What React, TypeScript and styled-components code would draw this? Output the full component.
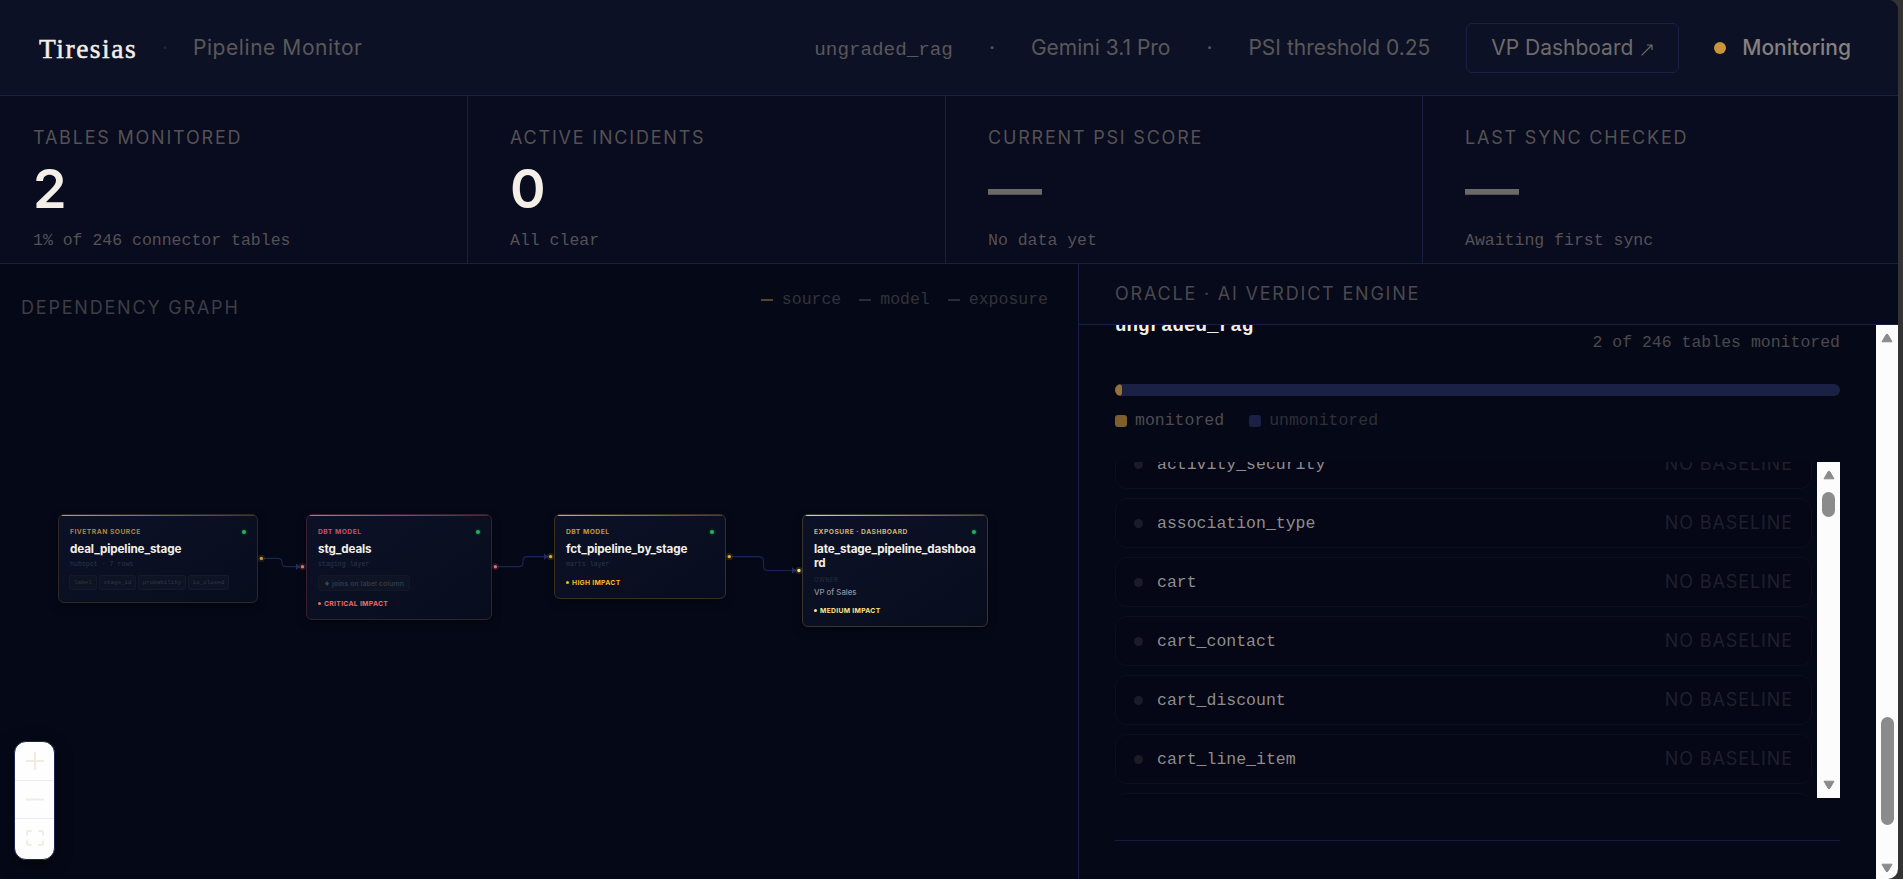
import React from "react";
import styled, { createGlobalStyle } from "styled-components";

const sans = `Inter, "Liberation Sans", sans-serif`;
const mono = `"Liberation Mono", "DejaVu Sans Mono", monospace`;
const line = "#1c1f45";

const GlobalStyle = createGlobalStyle`
  *, *::before, *::after { box-sizing: border-box; }
  html, body { margin: 0; background: #333333; }
  body { overflow: hidden; }
`;

const Page = styled.div`
  width: 1898px;
  height: 879px;
  display: flex;
  flex-direction: column;
  overflow: hidden;
  border-radius: 0 10px 10px 0;
  background: #050817;
  font-family: ${sans};
  color: #f0ece4;
`;

/* ---------- header ---------- */

const Header = styled.header`
  height: 96px;
  flex: none;
  display: flex;
  align-items: center;
  padding: 0 47px 0 39px;
  border-bottom: 1px solid ${line};
  background: #0d1126;
  font-size: 21px;
  line-height: 26px;
  color: #5a5859;
  white-space: nowrap;
`;

const Brand = styled.div`
  width: 98px;
  padding-top: 3px;
  font-family: "Liberation Serif", serif;
  font-size: 27.5px;
  line-height: 30px;
  letter-spacing: 1.5px;
  color: #f3efe6;
  -webkit-text-stroke: 0.5px #f3efe6;
`;

const BrandDot = styled.div`
  width: 56px;
  text-align: center;
  color: #1e2148;
`;

const Product = styled.div`
  letter-spacing: 0.56px;
`;

const HeaderMeta = styled.div`
  margin-left: auto;
  display: flex;
  align-items: center;
`;

const Connector = styled.div`
  padding-top: 4px;
  font-family: ${mono};
  font-size: 19.25px;
`;

const MetaDot = styled.div`
  width: 78px;
  text-align: center;
`;

const DashboardButton = styled.button`
  width: 213px;
  height: 50px;
  margin: 0 35px 0 36px;
  display: flex;
  align-items: center;
  justify-content: center;
  gap: 8px;
  padding: 0 1px 0 0;
  border: 1px solid ${line};
  border-radius: 6px;
  background: transparent;
  font: 400 21px/26px ${sans};
  color: #6e6b6b;
`;

const OpenIcon = styled.svg`
  margin-top: 4px;
`;

const Status = styled.div`
  display: flex;
  align-items: center;
  gap: 16px;
  font-weight: 500;
  color: #85817f;
`;

const StatusDot = styled.span`
  width: 12px;
  height: 12px;
  border-radius: 50%;
  background: #c9953a;
`;

/* ---------- stats ---------- */

const Stats = styled.section`
  height: 168px;
  flex: none;
  display: grid;
  grid-template-columns: 468px 478px 477px 1fr;
  border-bottom: 1px solid ${line};
  background: #090b1f;
`;

const Stat = styled.div<{ $first?: boolean }>`
  padding: 29px 0 0 ${(p) => (p.$first ? 33 : 42)}px;
  border-right: 1px solid ${line};
  &:last-child { border-right: 0; }
`;

const Caps = styled.div<{ $spacing?: number; $color?: string }>`
  font-size: 18px;
  line-height: 26px;
  letter-spacing: ${(p) => p.$spacing ?? 1.8}px;
  color: ${(p) => p.$color ?? "#555253"};
  white-space: nowrap;
`;

const StatValue = styled.div<{ $empty?: boolean }>`
  margin-top: 11px;
  font-size: 54px;
  line-height: 54px;
  font-weight: 600;
  color: ${(p) => (p.$empty ? "#6c6969" : "#f3efe6")};
`;

const Mono = styled.div<{ $color?: string }>`
  font-family: ${mono};
  font-size: 16.5px;
  line-height: 22px;
  color: ${(p) => p.$color ?? "#555253"};
  white-space: nowrap;
`;

const StatNote = styled(Mono)`
  margin-top: 14px;
`;

/* ---------- graph ---------- */

const Main = styled.main`
  flex: 1;
  min-height: 0;
  display: grid;
  grid-template-columns: 1078px 1fr;
`;

const Graph = styled.section`
  position: relative;
  min-width: 0;
`;

const GraphBar = styled.div`
  display: flex;
  align-items: flex-start;
  justify-content: space-between;
  padding: 25px 30px 0 21px;
`;

const GraphTitle = styled(Caps)`
  padding-top: 6px;
`;

const Legend = styled.div`
  display: flex;
  gap: 18px;
`;

const LegendItem = styled(Mono)`
  display: flex;
  align-items: center;
  gap: 9px;
`;

const LegendDash = styled.span<{ $color: string }>`
  width: 12px;
  height: 2px;
  background: ${(p) => p.$color};
`;

const Edges = styled.svg`
  position: absolute;
  left: 0;
  top: 0;
  width: 1078px;
  height: 615px;
`;

const Node = styled.article<{ $x: number; $w: number; $h: number; $accent: string; $edge: string }>`
  position: absolute;
  left: ${(p) => p.$x}px;
  top: 250px;
  width: ${(p) => p.$w}px;
  height: ${(p) => p.$h}px;
  padding: 12px 11px 0 11px;
  overflow: hidden;
  border: 1px solid ${(p) => p.$edge};
  border-radius: 6px;
  background: linear-gradient(145deg, #0d1127, #070d1d);
  box-shadow: 0 3px 10px rgba(0, 0, 0, 0.4);
  &::before {
    content: "";
    position: absolute;
    left: 0;
    right: 0;
    top: 0;
    height: 1.4px;
    background: linear-gradient(90deg, ${(p) => p.$accent}, ${(p) => p.$accent}44);
  }
`;

const NodeHead = styled.div`
  display: flex;
  align-items: center;
  justify-content: space-between;
  height: 10px;
`;

const NodeKind = styled.span<{ $color: string }>`
  font-size: 6.7px;
  font-weight: 700;
  letter-spacing: 0.5px;
  color: ${(p) => p.$color};
  white-space: nowrap;
`;

const Health = styled.span`
  width: 4px;
  height: 4px;
  border-radius: 50%;
  background: #22b35b;
  box-shadow: 0 0 3px #22b35b99;
`;

const NodeName = styled.div`
  margin-top: 5px;
  font-size: 11.7px;
  line-height: 14px;
  font-weight: 700;
  letter-spacing: -0.12px;
  color: #f3efe6;
  word-break: break-all;
`;

const NodeNote = styled.div`
  margin-top: 4px;
  font-family: ${mono};
  font-size: 6.6px;
  line-height: 9px;
  color: #2b3548;
`;

const Chips = styled.div`
  display: flex;
  gap: 2px;
  margin-top: 6px;
  margin-left: -1px;
`;

const Chip = styled.span<{ $w: number }>`
  width: ${(p) => p.$w}px;
  height: 15px;
  border: 1px solid #141a2c;
  border-radius: 2px;
  background: #0f1425;
  font: 400 5.8px/14px ${mono};
  text-align: center;
  color: #2e384b;
`;

const JoinChip = styled.div`
  display: flex;
  align-items: center;
  gap: 3px;
  width: 92px;
  height: 16px;
  margin-top: 6px;
  padding-left: 6px;
  border: 1px solid #131829;
  border-radius: 2px;
  background: #0f1425;
  font-size: 6.8px;
  font-weight: 600;
  letter-spacing: 0.14px;
  color: #303a4b;
  white-space: nowrap;
`;

const Impact = styled.div<{ $color: string; $top: number }>`
  display: flex;
  align-items: center;
  gap: 3px;
  height: 10px;
  margin-top: ${(p) => p.$top}px;
  font-size: 6.8px;
  font-weight: 700;
  letter-spacing: 0.3px;
  color: ${(p) => p.$color};
  white-space: nowrap;
  &::before {
    content: "";
    width: 3px;
    height: 3px;
    border-radius: 50%;
    background: ${(p) => p.$color};
  }
`;

const OwnerLabel = styled.div`
  margin-top: 6px;
  font-size: 5.8px;
  line-height: 8px;
  letter-spacing: 0.5px;
  color: #262f40;
`;

const Owner = styled.div`
  margin-top: 3px;
  font-size: 7.8px;
  line-height: 11px;
  font-weight: 500;
  color: #8e949f;
`;

const Controls = styled.div`
  position: absolute;
  left: 14px;
  top: 477px;
  width: 41px;
  height: 119px;
  display: flex;
  flex-direction: column;
  overflow: hidden;
  border: 1px solid #1c2450;
  border-radius: 12px;
  background: #fefefe;
  box-shadow: 0 4px 16px rgba(0, 0, 0, 0.5);
`;

const ControlButton = styled.button`
  flex: 1;
  display: flex;
  align-items: center;
  justify-content: center;
  padding: 0;
  border: 0;
  border-bottom: 1px solid #ebebeb;
  background: transparent;
  &:last-child { border-bottom: 0; padding-bottom: 2px; }
`;

/* ---------- oracle panel ---------- */

const Oracle = styled.aside`
  display: flex;
  flex-direction: column;
  min-width: 0;
  min-height: 0;
  border-left: 1px solid ${line};
`;

const OracleHead = styled.div`
  height: 61px;
  flex: none;
  padding: 17px 0 0 36px;
  border-bottom: 1px solid ${line};
  background: #070a1a;
`;

const OracleBody = styled.div`
  flex: 1;
  min-height: 0;
  display: flex;
`;

const OracleContent = styled.div`
  flex: 1;
  min-width: 0;
  overflow: hidden;
  padding: 0 36px;
`;

const CoverageHead = styled.div`
  display: flex;
  justify-content: space-between;
  height: 59px;
`;

const CoverageName = styled.div`
  margin-top: -12px;
  font: 700 19.2px/26px ${mono};
  color: #f3efe6;
`;

const CoverageCount = styled(Mono)`
  margin-top: 7px;
`;

const Track = styled.div`
  height: 12px;
  overflow: hidden;
  border-radius: 6px;
  background: #1b2144;
`;

const Fill = styled.div`
  width: 7px;
  height: 12px;
  border-radius: 6px;
  background: #94713c;
`;

const Keys = styled.div`
  display: flex;
  gap: 25px;
  margin-top: 13px;
`;

const Key = styled(Mono)`
  display: flex;
  align-items: center;
  gap: 8px;
  height: 23px;
`;

const Swatch = styled.span<{ $color: string }>`
  width: 12px;
  height: 12px;
  border-radius: 3px;
  background: ${(p) => p.$color};
`;

const TableFrame = styled.div`
  display: flex;
  justify-content: space-between;
  height: 336px;
  margin-top: 30px;
`;

const TableList = styled.div`
  width: 697px;
  overflow: hidden;
  display: flex;
  flex-direction: column;
  gap: 9px;
`;

const TableRow = styled.div`
  flex: none;
  display: flex;
  align-items: center;
  height: 50px;
  padding: 0 18px;
  border: 1px solid #0a0f21;
  border-radius: 12px;
  background: #050616;
  &:first-child { margin-top: -23px; }
`;

const RowDot = styled.span`
  width: 9px;
  height: 9px;
  margin-right: 14px;
  border-radius: 50%;
  background: #1b1c28;
`;

const RowName = styled(Mono)`
  flex: 1;
  padding-top: 1px;
`;

const Rule = styled.div`
  height: 1px;
  margin-top: 42px;
  background: #161b40;
`;

const Scrollbar = styled.div`
  display: flex;
  flex-direction: column;
  align-items: center;
  width: 23px;
  flex: none;
  padding: 8px 0;
  background: #fcfcfc;
`;

const PanelScrollbar = styled(Scrollbar)`
  width: 22px;
  padding-bottom: 6px;
`;

const Arrow = styled.svg`
  flex: none;
  display: block;
`;

const Thumb = styled.div<{ $top: number; $height: number }>`
  width: 13px;
  height: ${(p) => p.$height}px;
  margin-top: ${(p) => p.$top}px;
  margin-bottom: auto;
  border-radius: 7px;
  background: #8b8b8b;
`;

const ScrollArrow = ({ down = false }: { down?: boolean }) => (
  <Arrow width="12" height="10" viewBox="0 0 12 10">
    <path
      d={down ? "M1 1.2h10L7 8.2q-1 1.4-2 0z" : "M1 8.8h10L7 1.8q-1-1.4-2 0z"}
      fill="#8b8b8b"
      stroke="#8b8b8b"
      strokeWidth="1"
      strokeLinejoin="round"
    />
  </Arrow>
);

const stats = [
  { label: "Tables Monitored", value: "2", note: "1% of 246 connector tables" },
  { label: "Active Incidents", value: "0", note: "All clear" },
  { label: "Current PSI Score", value: "—", note: "No data yet" },
  { label: "Last Sync Checked", value: "—", note: "Awaiting first sync" },
];

const tables = [
  "activity_security",
  "association_type",
  "cart",
  "cart_contact",
  "cart_discount",
  "cart_line_item",
  "",
];

const columns = [
  { name: "label", w: 28 },
  { name: "stage_id", w: 37 },
  { name: "probability", w: 48 },
  { name: "is_closed", w: 41 },
];

const handles = [
  { x: 261.4, y: 294.4, c: "#c9953a" },
  { x: 302.5, y: 302.7, c: "#ef6a6a" },
  { x: 495.4, y: 302.7, c: "#ef6a6a" },
  { x: 550.6, y: 292.6, c: "#eab127" },
  { x: 729.3, y: 292.6, c: "#eab127" },
  { x: 798.9, y: 306.5, c: "#f5dc85" },
];

export default function App() {
  return (
    <Page>
      <GlobalStyle />
      <Header>
        <Brand>Tiresias</Brand>
        <BrandDot>·</BrandDot>
        <Product>Pipeline Monitor</Product>
        <HeaderMeta>
          <Connector>ungraded_rag</Connector>
          <MetaDot>·</MetaDot>
          <div>Gemini 3.1 Pro</div>
          <MetaDot>·</MetaDot>
          <div>PSI threshold 0.25</div>
          <DashboardButton>
            <span>VP Dashboard</span>
            <OpenIcon width="12" height="12" viewBox="0 0 12 12" fill="none" stroke="currentColor" strokeWidth="1.2">
              <path d="M0.6 11.4 11 1M6 1H11v5" />
            </OpenIcon>
          </DashboardButton>
          <Status>
            <StatusDot />
            Monitoring
          </Status>
        </HeaderMeta>
      </Header>

      <Stats>
        {stats.map((s, i) => (
          <Stat key={s.label} $first={i === 0}>
            <Caps>{s.label.toUpperCase()}</Caps>
            <StatValue $empty={s.value === "—"}>{s.value}</StatValue>
            <StatNote>{s.note}</StatNote>
          </Stat>
        ))}
      </Stats>

      <Main>
        <Graph>
          <GraphBar>
            <GraphTitle $color="#3e3e44">DEPENDENCY GRAPH</GraphTitle>
            <Legend>
              <LegendItem $color="#333339"><LegendDash $color="#5c4526" />source</LegendItem>
              <LegendItem $color="#333339"><LegendDash $color="#2c2c36" />model</LegendItem>
              <LegendItem $color="#333339"><LegendDash $color="#2c2c36" />exposure</LegendItem>
            </Legend>
          </GraphBar>

          <Node $x={58} $w={200} $h={89} $accent="#d39b35" $edge="#2c2826">
            <NodeHead>
              <NodeKind $color="#b98435">FIVETRAN SOURCE</NodeKind>
              <Health />
            </NodeHead>
            <NodeName>deal_pipeline_stage</NodeName>
            <NodeNote>hubspot · 7 rows</NodeNote>
            <Chips>
              {columns.map((c) => (
                <Chip key={c.name} $w={c.w}>{c.name}</Chip>
              ))}
            </Chips>
          </Node>

          <Node $x={306} $w={186} $h={106} $accent="#f0646b" $edge="#3a1f30">
            <NodeHead>
              <NodeKind $color="#cf525c">DBT MODEL</NodeKind>
              <Health />
            </NodeHead>
            <NodeName>stg_deals</NodeName>
            <NodeNote>staging layer</NodeNote>
            <JoinChip>
              <svg width="4" height="5" viewBox="0 0 4 5">
                <path d="M2 0 4 2.5 2 5 0 2.5z" fill="#3c4352" />
              </svg>
              joins on label column
            </JoinChip>
            <Impact $color="#f8636a" $top={7}>CRITICAL IMPACT</Impact>
          </Node>

          <Node $x={554} $w={172} $h={85} $accent="#eab127" $edge="#3a3120">
            <NodeHead>
              <NodeKind $color="#cd9a27">DBT MODEL</NodeKind>
              <Health />
            </NodeHead>
            <NodeName>fct_pipeline_by_stage</NodeName>
            <NodeNote>marts layer</NodeNote>
            <Impact $color="#f8b922" $top={8}>HIGH IMPACT</Impact>
          </Node>

          <Node $x={802} $w={186} $h={113} $accent="#f3d778" $edge="#38352f">
            <NodeHead>
              <NodeKind $color="#d0b76a">EXPOSURE · DASHBOARD</NodeKind>
              <Health />
            </NodeHead>
            <NodeName>late_stage_pipeline_dashboard</NodeName>
            <OwnerLabel>OWNER</OwnerLabel>
            <Owner>VP of Sales</Owner>
            <Impact $color="#fbe38b" $top={7}>MEDIUM IMPACT</Impact>
          </Node>

          <Edges viewBox="0 0 1078 615" fill="none">
            <g stroke="#1b2452" strokeWidth="1.2">
              <path d="M264 294.4H278Q282 294.4 282 298.5T286 302.7H297" />
              <path d="M498 302.7H519Q523 302.7 523 298.5V297Q523 292.6 527 292.6H545" />
              <path d="M732 292.6H759Q763.5 292.6 763.5 297V302Q763.5 306.5 768 306.5H794" />
            </g>
            <g fill="#232d63">
              <path d="M296 299.5 300.2 302.7 296 305.9z" />
              <path d="M544 289.4 548.2 292.6 544 295.8z" />
              <path d="M792 303.3 796.2 306.5 792 309.7z" />
            </g>
            {handles.map((h) => (
              <g key={h.x} fill={h.c}>
                <circle cx={h.x} cy={h.y} r="3.6" opacity="0.14" />
                <circle cx={h.x} cy={h.y} r="1.7" />
              </g>
            ))}
          </Edges>

          <Controls>
            <ControlButton aria-label="Zoom in">
              <svg width="18" height="18" viewBox="0 0 18 18" stroke="#f0ece2" strokeWidth="2">
                <path d="M9 0v18M0 9h18" />
              </svg>
            </ControlButton>
            <ControlButton aria-label="Zoom out">
              <svg width="18" height="18" viewBox="0 0 18 18" stroke="#f0ece2" strokeWidth="2">
                <path d="M0 8.5h18" />
              </svg>
            </ControlButton>
            <ControlButton aria-label="Fit view">
              <svg width="18" height="16" viewBox="0 0 18 16" fill="none" stroke="#f0ece2" strokeWidth="2">
                <path d="M1 5.5V2.4Q1 1 2.4 1H5.7M12.3 1h3.3Q17 1 17 2.4v3.1M17 10.5v3.1q0 1.4-1.4 1.4h-3.3M5.7 15H2.4Q1 15 1 13.6v-3.1" />
              </svg>
            </ControlButton>
          </Controls>
        </Graph>

        <Oracle>
          <OracleHead>
            <Caps $color="#4b494d">ORACLE · AI VERDICT ENGINE</Caps>
          </OracleHead>
          <OracleBody>
            <OracleContent>
              <CoverageHead>
                <CoverageName>ungraded_rag</CoverageName>
                <CoverageCount $color="#4b494d">2 of 246 tables monitored</CoverageCount>
              </CoverageHead>
              <Track>
                <Fill />
              </Track>
              <Keys>
                <Key $color="#4e4c50"><Swatch $color="#7f5e2d" />monitored</Key>
                <Key $color="#2f3038"><Swatch $color="#1b2144" />unmonitored</Key>
              </Keys>
              <TableFrame>
                <TableList>
                  {tables.map((t, i) => (
                    <TableRow key={i}>
                      {t && (
                        <>
                          <RowDot />
                          <RowName $color="#8f8d8c">{t}</RowName>
                          <Caps $color="#1f202b" $spacing={0.9}>NO BASELINE</Caps>
                        </>
                      )}
                    </TableRow>
                  ))}
                </TableList>
                <Scrollbar>
                  <ScrollArrow />
                  <Thumb $top={12} $height={25} />
                  <ScrollArrow down />
                </Scrollbar>
              </TableFrame>
              <Rule />
            </OracleContent>
            <PanelScrollbar>
              <ScrollArrow />
              <Thumb $top={374} $height={108} />
              <ScrollArrow down />
            </PanelScrollbar>
          </OracleBody>
        </Oracle>
      </Main>
    </Page>
  );
}
